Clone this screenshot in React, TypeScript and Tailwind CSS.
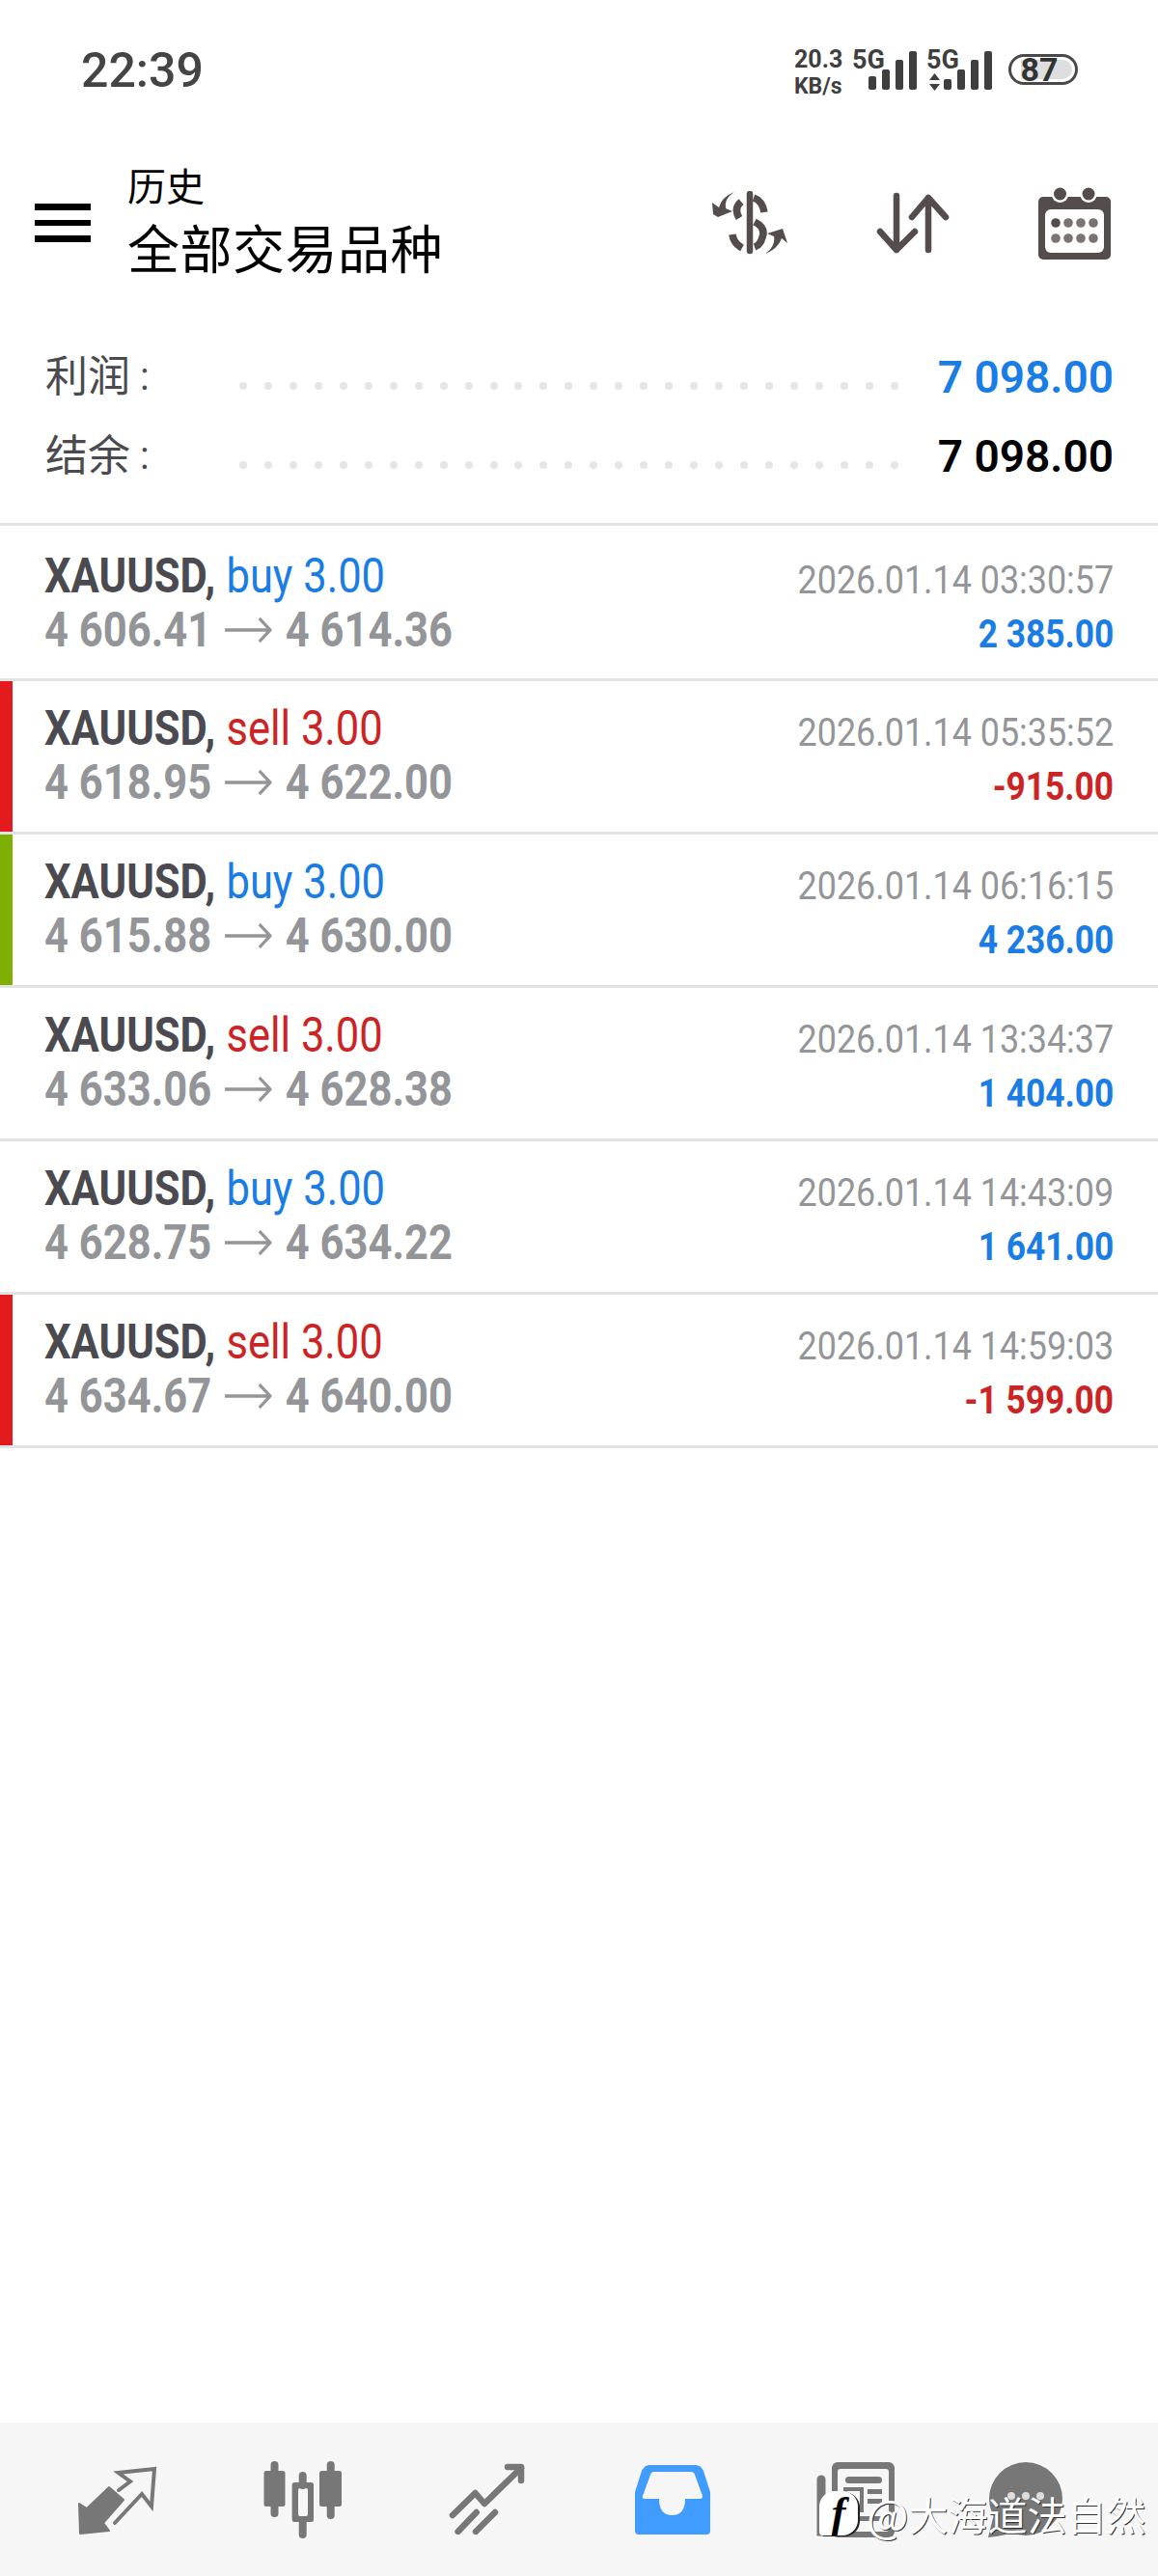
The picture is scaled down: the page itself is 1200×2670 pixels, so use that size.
const rows = [
  { side: "buy", open: "4 606.41", close: "4 614.36", date: "2026.01.14 03:30:57", profit: "2 385.00", bar: "" },
  { side: "sell", open: "4 618.95", close: "4 622.00", date: "2026.01.14 05:35:52", profit: "-915.00", bar: "bg-[#e31b1e]" },
  { side: "buy", open: "4 615.88", close: "4 630.00", date: "2026.01.14 06:16:15", profit: "4 236.00", bar: "bg-[#7db002]" },
  { side: "sell", open: "4 633.06", close: "4 628.38", date: "2026.01.14 13:34:37", profit: "1 404.00", bar: "" },
  { side: "buy", open: "4 628.75", close: "4 634.22", date: "2026.01.14 14:43:09", profit: "1 641.00", bar: "" },
  { side: "sell", open: "4 634.67", close: "4 640.00", date: "2026.01.14 14:59:03", profit: "-1 599.00", bar: "bg-[#e31b1e]" },
];

function StatusRight() {
  return (
    <div className="flex items-start font-['Roboto',sans-serif] font-bold text-[#3f3f3f]">
      <div className="w-[60px] text-[25px] leading-[28px]">
        <div>20.3</div>
        <div className="text-[23px]">KB/s</div>
      </div>
      <div className="relative h-[45px] w-[77px]">
        <div className="text-[27px] leading-[28px]">5G</div>
        <svg width="50" height="40" viewBox="0 0 50 40" fill="#3f3f3f" className="absolute left-[17px] top-[5px]">
          <rect x="0" y="26" width="8" height="14" rx="2" />
          <rect x="14" y="19" width="8" height="21" rx="2" />
          <rect x="28" y="9" width="8" height="31" rx="2" />
          <rect x="42" y="0" width="8" height="40" rx="2" />
        </svg>
      </div>
      <div className="relative h-[45px] w-[68px]">
        <div className="text-[27px] leading-[28px]">5G</div>
        <svg width="11" height="18" viewBox="0 0 11 18" fill="#3f3f3f" className="absolute left-[3px] top-[28px]">
          <path d="M5.500 0 L11 7 H0 Z M0 11 H11 L5.500 18 Z" />
        </svg>
        <svg width="50" height="40" viewBox="0 0 50 40" fill="#3f3f3f" className="absolute left-[18px] top-[5px]">
          <rect x="0" y="29" width="8" height="11" rx="2" />
          <rect x="14" y="19" width="8" height="21" rx="2" />
          <rect x="28" y="9" width="8" height="31" rx="2" />
          <rect x="42" y="0" width="8" height="40" rx="2" />
        </svg>
      </div>
      <div className="relative ml-[17px] mt-[8px] h-[32px] w-[72px] rounded-full border-[3px] border-[#4a4a4a]">
        <div className="absolute bottom-[3px] left-[10px] right-[3px] top-[3px] rounded-r-full bg-[#dedede]" />
        <div className="absolute inset-0 flex items-center justify-center pr-[8px] text-[34px] leading-none text-[#333]">87</div>
      </div>
    </div>
  );
}

function DollarIcon() {
  return (
    <svg width="78" height="66" viewBox="0 0 78 66" fill="none" stroke="#554c4c" strokeWidth="7.500">
      <path d="M39 3V62" strokeLinecap="round" strokeWidth="6.500" />
      <path d="M54 22Q52 10 43 7" />
      <path d="M30 11Q22 18 28 28" />
      <path d="M44 32Q56 38 52 48Q50 56 44 58" />
      <path d="M21 45Q22 54 31 59" />
      <path d="M23 1Q12 8 14 18L21 21L6 27L1 24L0 12L7 17Q10 6 23 1Z" fill="#554c4c" stroke="none" />
      <path d="M55 65Q66 57 64 47L57 44L73 39L78 54L72 49Q68 60 55 65Z" fill="#554c4c" stroke="none" />
    </svg>
  );
}

function ArrowsIcon() {
  return (
    <svg width="76" height="64" viewBox="0 0 76 64" fill="none" stroke="#554c4c" strokeWidth="6.500" strokeLinecap="round" strokeLinejoin="round">
      <path d="M21 4V60M4 41L21 60L40 41" />
      <path d="M54 6V60M37 26L54 6L72 26" />
    </svg>
  );
}

function CalendarIcon() {
  const xs = [18, 31, 44, 57];
  return (
    <svg width="75" height="75" viewBox="0 0 75 75">
      <rect x="0" y="10" width="75" height="65" rx="5" fill="#554c4c" />
      <rect x="7" y="23" width="61" height="45" rx="6" fill="#fff" />
      <circle cx="22.500" cy="7" r="9" fill="#fff" />
      <circle cx="52" cy="7" r="9" fill="#fff" />
      <circle cx="22.500" cy="7" r="6.500" fill="#554c4c" />
      <circle cx="52" cy="7" r="6.500" fill="#554c4c" />
      {xs.map((x, i) => (
        <circle key={x} cx={x} cy="37" r="4.800" fill={i === 0 ? "#554c4c" : "#7a7472"} />
      ))}
      {xs.map((x) => (
        <circle key={x} cx={x} cy="53" r="4.800" fill="#7a7472" />
      ))}
    </svg>
  );
}

function ExchangeIcon() {
  return (
    <svg width="84" height="76" viewBox="0 0 84 76" fill="none" className="translate-x-[1px] translate-y-[2px]">
      <path d="M2 40L10 45L33 23L48 36L27 60L33 68L3 71Z" fill="#777" stroke="#777" strokeWidth="2" strokeLinejoin="round" />
      <path d="M43 26L55 17L42.500 8L80 4L77 43L67 30L39 60" stroke="#777" strokeWidth="4" strokeLinejoin="miter" strokeLinecap="round" />
    </svg>
  );
}

function CandlesIcon() {
  return (
    <svg width="84" height="84" viewBox="0 0 84 84" fill="#777">
      <rect x="2.500" y="12" width="22" height="37" rx="2.500" />
      <rect x="9.500" y="2" width="8" height="58" rx="4" />
      <path fillRule="evenodd" d="M34 24H51.500Q54 24 54 26.500V62.500Q54 65 51.500 65H34Q31.600 65 31.600 62.500V26.500Q31.600 24 34 24ZM40 30Q38 30 38 32V57Q38 59 40 59H46Q48 59 48 57V32Q48 30 46 30Z" />
      <rect x="38.700" y="13" width="8" height="18" rx="4" />
      <rect x="38.700" y="60" width="8" height="22" rx="4" />
      <rect x="60" y="12" width="23" height="37" rx="2.500" />
      <rect x="67.700" y="2" width="8" height="60" rx="4" />
    </svg>
  );
}

function ChartIcon() {
  return (
    <svg width="80" height="76" viewBox="0 0 80 76" fill="none" stroke="#777" strokeWidth="6.500" strokeLinecap="round" strokeLinejoin="round" className="-translate-x-[1px] -translate-y-[2px]">
      <path d="M5 56L28.500 33L38 44L76 7" />
      <path d="M62 6H76V20" />
      <path d="M10.600 73L29.700 53" />
      <path d="M29 73L49 53" />
    </svg>
  );
}

function InboxIcon() {
  return (
    <svg width="78" height="72" viewBox="0 0 78 72">
      <path d="M15 0H63Q68 0 71 6L78 28V68Q78 72 74 72H4Q0 72 0 68V28L7 6Q10 0 15 0Z" fill="#409cff" />
      <path d="M20 7H58Q61 7 62 10L70 32Q70 35 67 35H52Q52 52 38.500 52Q25 52 25 35H10Q7 35 8 32L16 10Q17 7 20 7Z" fill="#f6f6f6" />
    </svg>
  );
}

function NewsIcon() {
  return (
    <svg width="82" height="78" viewBox="0 0 82 78" fill="#777" className="-translate-x-[2px]">
      <rect x="16" y="0" width="65" height="78" rx="6" />
      <path d="M5 18V72H16" fill="none" stroke="#777" strokeWidth="9" strokeLinecap="round" />
      <rect x="22" y="7" width="53" height="65" rx="3" fill="#f6f6f6" />
      <rect x="30" y="15" width="38" height="7" rx="3.500" />
      <rect x="30" y="28" width="17" height="22" fill="none" stroke="#777" strokeWidth="4" />
      <rect x="53" y="28" width="15" height="5" />
      <rect x="53" y="38" width="15" height="5" />
      <rect x="30" y="56" width="38" height="5" />
    </svg>
  );
}

function ChatIcon() {
  return (
    <svg width="80" height="78" viewBox="0 0 80 78" fill="#777">
      <circle cx="40" cy="38" r="38" />
      <path d="M8 50L1 78Q22 76 34 70Z" />
      <circle cx="25" cy="35" r="4" fill="#ddd" />
      <circle cx="40" cy="35" r="4" fill="#ddd" />
      <circle cx="55" cy="35" r="4" fill="#ddd" />
    </svg>
  );
}

function Summary({ label, value, color }: { label: string; value: string; color: string }) {
  return (
    <div className="flex h-[82px] items-center">
      <div className="-mt-[1px] flex w-[201px] items-center font-['Roboto','Noto_Sans_CJK_SC',sans-serif] text-[44px] leading-none text-[#4a4a4f]">
        <span>{label}</span>
        <span className="ml-[10px] text-[40px]">:</span>
      </div>
      <div className="mt-[18px] flex w-[683px] justify-between">
        {Array.from({ length: 27 }).map((_, i) => (
          <span key={i} className="block h-[8px] w-[8px] rounded-full bg-[#e6e6e6]" />
        ))}
      </div>
      <div className={`-mr-[1px] ml-auto font-['Roboto',sans-serif] text-[46px] font-semibold leading-none ${color}`}>{value}</div>
    </div>
  );
}

function Row({ r, first }: { r: (typeof rows)[number]; first: boolean }) {
  const c = r.side === "buy" ? "text-[#1a7de6]" : "text-[#cc2425]";
  const p = r.profit.startsWith("-") ? "text-[#cc2425]" : "text-[#1a7de6]";
  return (
    <div className={`flex border-b-[3px] border-[#e3e3e3] ${first ? "h-[161px] pt-[3px]" : "h-[159px]"}`}>
      <div className={`w-[13px] shrink-0 ${r.bar}`} />
      <div className="flex flex-1 justify-between pl-[33px] pr-[46px] font-['Roboto',sans-serif]">
        <div className="pt-[21px]">
          <div className="h-[56px] w-fit origin-left scale-x-[0.87] whitespace-nowrap text-[50px] leading-[56px]">
            <span className="font-bold text-[#4a4a50]">XAUUSD,</span>
            <span className={`ml-[13px] ${c}`}>{r.side} 3.00</span>
          </div>
          <div className="flex h-[56px] w-fit origin-left scale-x-[0.87] items-center whitespace-nowrap text-[50px] font-bold leading-[56px] text-[#939598]">
            <span>{r.open}</span>
            <svg width="56" height="30" viewBox="0 0 56 30" fill="none" stroke="#939598" strokeWidth="3.500" className="mx-[16px]">
              <path d="M0 15H54M41 3L54 15L41 27" />
            </svg>
            <span>{r.close}</span>
          </div>
        </div>
        <div className="flex flex-col items-end pt-[26px]">
          <div className="h-[56px] origin-right scale-x-[0.897] whitespace-nowrap text-[40px] leading-[56px] text-[#939598]">{r.date}</div>
          <div className={`h-[56px] origin-right scale-x-[0.883] whitespace-nowrap text-[40px] font-bold leading-[56px] ${p}`}>{r.profit}</div>
        </div>
      </div>
    </div>
  );
}

export default function App() {
  return (
    <div className="relative flex h-[2670px] w-[1200px] flex-col overflow-hidden bg-white">
      <div className="flex h-[146px] shrink-0 items-start justify-between pl-[84px] pr-[83px] pt-[48px]">
        <div className="font-['Roboto',sans-serif] text-[50px] font-medium leading-[50px] text-[#444]">22:39</div>
        <StatusRight />
      </div>

      <div className="flex h-[170px] shrink-0 items-center pl-[36px] pr-[49px]">
        <div className="flex h-[40px] w-[58px] flex-col justify-between">
          <span className="block h-[7px] bg-black" />
          <span className="block h-[6px] bg-black" />
          <span className="block h-[7px] bg-black" />
        </div>
        <div className="ml-[38px] mt-[3px] font-['Roboto','Noto_Sans_CJK_SC',sans-serif] text-black">
          <div className="text-[40px] leading-[48px]">历史</div>
          <div className="mt-[9px] text-[54px] leading-[66px] tracking-[0.5px]">全部交易品种</div>
        </div>
        <div className="ml-auto flex items-center">
          <DollarIcon />
          <div className="ml-[92px]"><ArrowsIcon /></div>
          <div className="ml-[92px]"><CalendarIcon /></div>
        </div>
      </div>

      <div className="shrink-0 px-[47px] pb-[28px] pt-[34px]">
        <Summary label="利润" value="7 098.00" color="text-[#1a7de6]" />
        <Summary label="结余" value="7 098.00" color="text-black" />
      </div>

      <div className="shrink-0 border-t-[3px] border-[#e3e3e3]">
        {rows.map((r, i) => (
          <Row key={r.date} r={r} first={i === 0} />
        ))}
      </div>

      <div className="mt-auto flex h-[159px] shrink-0 items-center bg-[#f6f6f6] pl-[25px]">
        <div className="flex w-[192px] justify-center"><ExchangeIcon /></div>
        <div className="flex w-[192px] justify-center"><CandlesIcon /></div>
        <div className="flex w-[192px] justify-center"><ChartIcon /></div>
        <div className="flex w-[192px] justify-center"><InboxIcon /></div>
        <div className="flex w-[192px] justify-center"><NewsIcon /></div>
        <div className="flex w-[156px] justify-center"><ChatIcon /></div>
      </div>

      <div className="absolute left-[849px] top-[2582px] flex items-center font-['Noto_Sans_CJK_SC',sans-serif] text-[41px] leading-[46px] text-white [text-shadow:1px_1px_0_#333]">
        <div className="relative flex h-[46px] w-[40px] items-center justify-center rounded-[16px] rounded-bl-[4px] bg-white font-['Liberation_Serif',serif] text-[44px] font-bold italic text-black shadow-[2px_1px_0_#222] [text-shadow:none]">f</div>
        <span className="ml-[9px] text-[46px]">@</span>
        <span>大海道法自然</span>
      </div>
    </div>
  );
}
